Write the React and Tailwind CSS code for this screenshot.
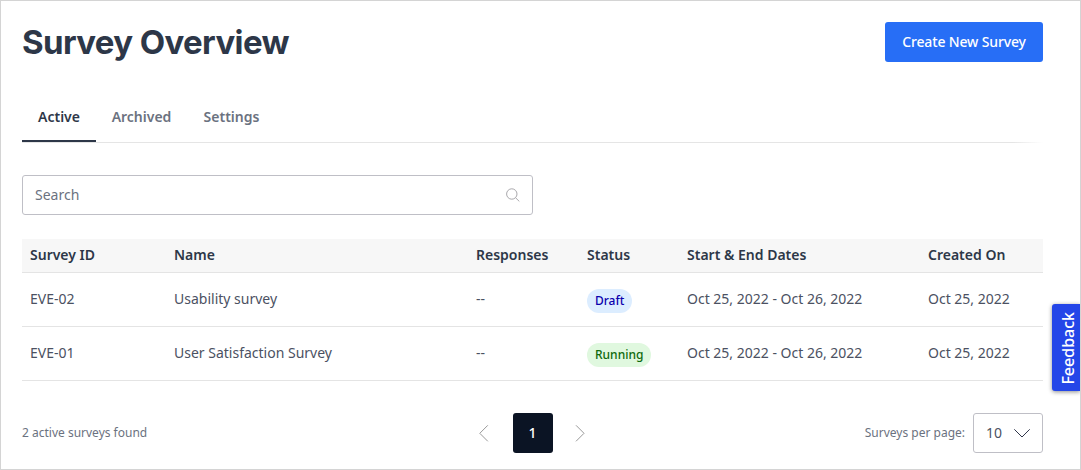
const surveys = [
  { id: "EVE-02", name: "Usability survey", status: "Draft" },
  { id: "EVE-01", name: "User Satisfaction Survey", status: "Running" },
];

const badgeStyles = {
  Draft: "bg-[#dcedff] text-[#0b00ad]",
  Running: "bg-[#e0f8df] text-[#0f6a0c]",
};

const grid = "grid grid-cols-[144px_302px_111px_100px_241px_1fr] px-2";

function Header() {
  return (
    <header className="flex h-10 items-center justify-between">
      <h1 className="whitespace-nowrap font-['Inter',sans-serif] text-[33px] leading-10 font-bold tracking-[-0.62px] text-[#2d3748]">
        Survey Overview
      </h1>
      <button className="h-10 w-[158px] rounded-[3px] bg-[#276ef6] text-sm font-medium tracking-[-0.14px] whitespace-nowrap text-white">
        Create New Survey
      </button>
    </header>
  );
}

function Tabs() {
  return (
    <div className="mt-[30px]">
      <nav className="flex h-[50px] text-sm font-semibold text-[#6b7280]">
        <a className="w-[74px] border-b-2 border-[#2d3748] pt-[15px] text-center text-[#2d3748]">Active</a>
        <a className="w-[91px] pt-[15px] text-center">Archived</a>
        <a className="w-[89px] pt-[15px] text-center">Settings</a>
      </nav>
      <div className="h-px bg-linear-to-r from-[#e5e5e5] from-97% to-white" />
    </div>
  );
}

function SearchBox() {
  return (
    <div className="mt-8 flex h-10 w-[511px] items-center justify-between rounded-[3px] border border-[#bfbfc6] pr-[11px] pl-3 text-sm text-[#6b7280]">
      <span>Search</span>
      <svg className="h-4 w-4" viewBox="0 0 16 16" fill="none" stroke="#aaa9ad" strokeWidth="1">
        <circle cx="6.8" cy="7" r="5.2" />
        <path d="M10.5 10.7 14.3 14.4" />
      </svg>
    </div>
  );
}

function SurveyTable() {
  return (
    <section className="mt-6 text-sm">
      <div className={`${grid} h-[34px] items-center border-b border-[#e4e4e4] bg-[#f7f7f7] pb-px font-semibold text-[#2d3748]`}>
        <span>Survey ID</span>
        <span>Name</span>
        <span>Responses</span>
        <span>Status</span>
        <span>Start &amp; End Dates</span>
        <span>Created On</span>
      </div>
      {surveys.map((survey) => (
        <div key={survey.id} className={`${grid} h-[54px] items-start border-b border-[#e4e4e4] pt-4 text-[#4b5162]`}>
          <span>{survey.id}</span>
          <span>{survey.name}</span>
          <span>--</span>
          <span className={`flex h-6 w-fit items-center rounded-full px-2 text-xs font-medium ${badgeStyles[survey.status]}`}>
            {survey.status}
          </span>
          <span>Oct 25, 2022 - Oct 26, 2022</span>
          <span>Oct 25, 2022</span>
        </div>
      ))}
    </section>
  );
}

function Footer() {
  return (
    <footer className="mt-8 grid h-10 grid-cols-[1fr_120px_1fr] items-center text-xs text-[#6b7280]">
      <span>2 active surveys found</span>
      <div className="flex items-center text-sm">
        <svg className="h-10 w-10" viewBox="0 0 40 40" fill="none" stroke="#999999" strokeWidth="1">
          <path d="M14.8 12.3 6.8 20.3 14.8 28.3" />
        </svg>
        <span className="flex h-10 w-10 items-center justify-center rounded-[3px] bg-[#0b1424] font-medium text-white">1</span>
        <svg className="h-10 w-10" viewBox="0 0 40 40" fill="none" stroke="#999999" strokeWidth="1">
          <path d="M23 12.3 31 20.3 23 28.3" />
        </svg>
      </div>
      <div className="flex items-center justify-end gap-2">
        <span>Surveys per page:</span>
        <div className="flex h-10 w-[70px] items-center justify-between rounded-[3px] border border-[#bfbfc6] px-3 text-sm text-[#4b5162]">
          <span>10</span>
          <svg className="h-4 w-4" viewBox="0 0 16 16" fill="none" stroke="#30364a" strokeWidth="1">
            <path d="M.3 4.3 8 12 15.7 4.3" />
          </svg>
        </div>
      </div>
    </footer>
  );
}

export default function App() {
  return (
    <main className="relative h-[470px] w-[1081px] overflow-hidden border border-[#d4d4d4] bg-white pt-[21px] pr-[37px] pl-[21px] font-['Noto_Sans',sans-serif]">
      <Header />
      <Tabs />
      <SearchBox />
      <SurveyTable />
      <Footer />
      <button className="absolute top-[303px] right-0 flex h-[87px] w-7 items-center justify-center rounded-l-[3px] bg-[#2446e8] pt-0.5 pl-1 shadow-[0_1px_4px_rgba(0,0,0,0.45)]">
        <span className="rotate-180 text-base leading-6 font-medium text-white [writing-mode:vertical-rl]">Feedback</span>
      </button>
    </main>
  );
}
